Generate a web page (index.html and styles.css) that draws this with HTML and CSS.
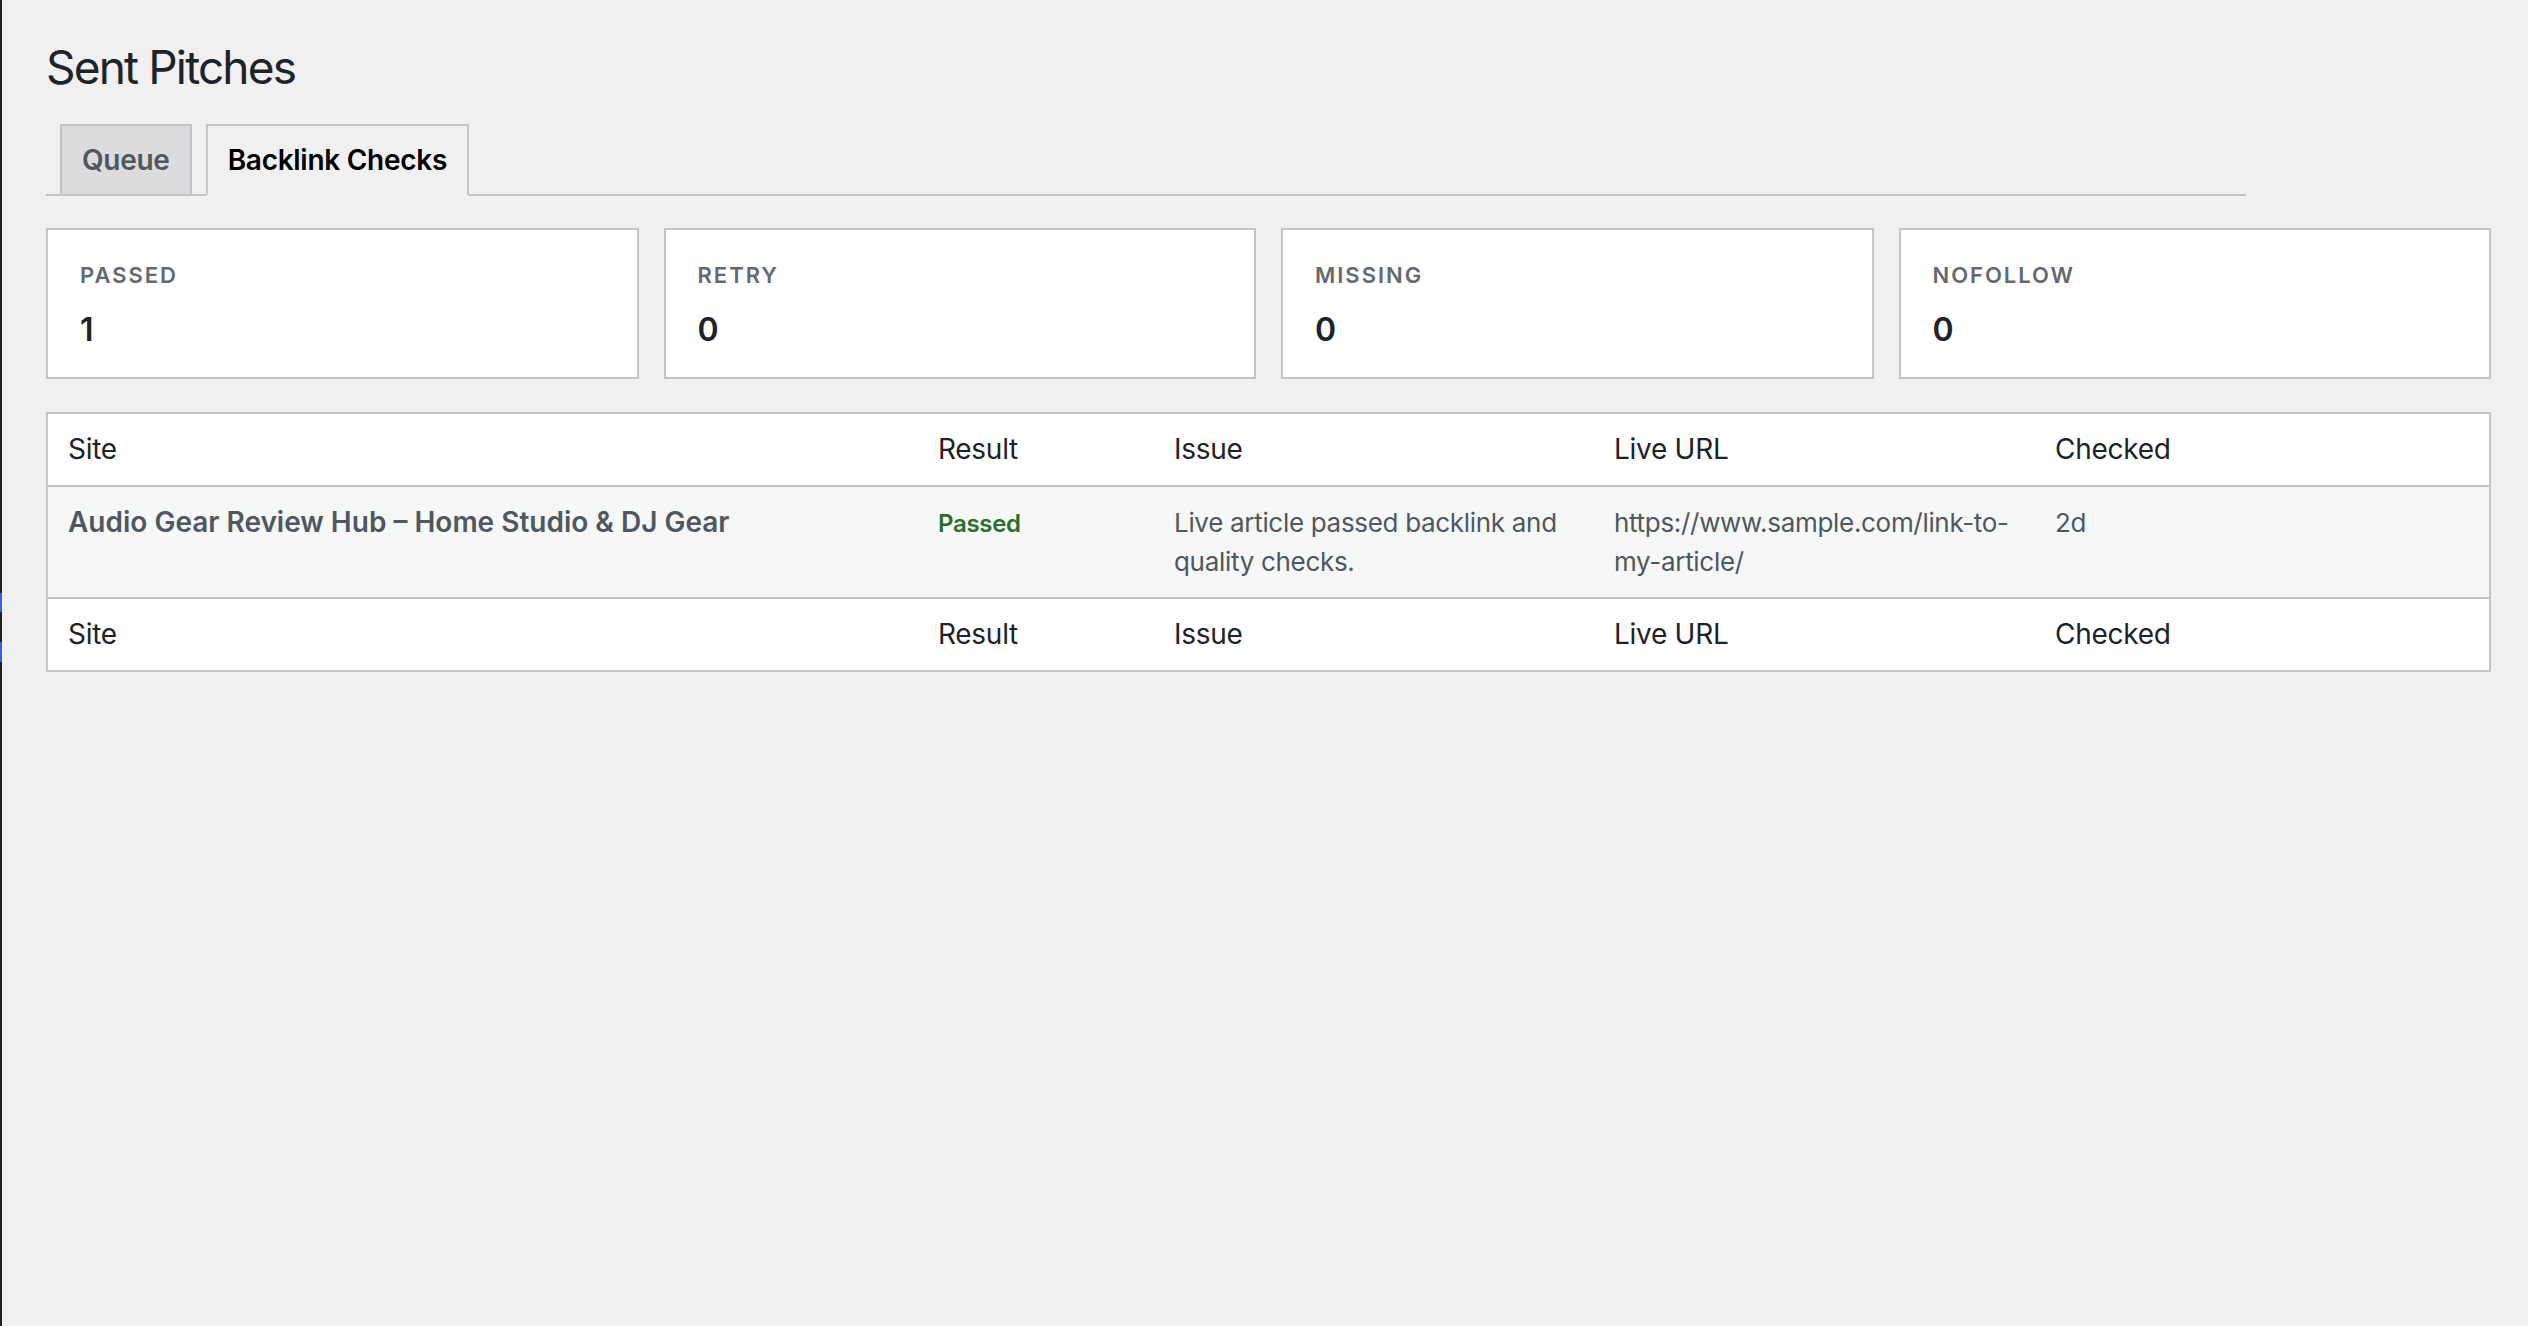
FILE: index.html
```html
<!DOCTYPE html>
<html lang="en">
<head>
  <meta charset="UTF-8">
  <meta name="viewport" content="width=device-width, initial-scale=1.0">
  <title>Sent Pitches - Backlink Checks</title>
  <link rel="stylesheet" href="styles.css">
</head>
<body>
  <!-- Edge of the admin menu -->
  <div class="admin-edge">
    <span class="edge-mark"></span>
    <span class="edge-mark second"></span>
  </div>

  <div class="wrap">
    <h1>Sent Pitches</h1>

    <nav class="nav-tab-wrapper">
      <a class="nav-tab" href="#queue">Queue</a>
      <a class="nav-tab nav-tab-active" href="#checks">Backlink Checks</a>
    </nav>

    <!-- Summary cards -->
    <div class="stat-grid">
      <div class="stat-card">
        <div class="stat-label">Passed</div>
        <div class="stat-value">1</div>
      </div>
      <div class="stat-card">
        <div class="stat-label">Retry</div>
        <div class="stat-value">0</div>
      </div>
      <div class="stat-card">
        <div class="stat-label">Missing</div>
        <div class="stat-value">0</div>
      </div>
      <div class="stat-card">
        <div class="stat-label">Nofollow</div>
        <div class="stat-value">0</div>
      </div>
    </div>

    <!-- Check results -->
    <table class="widefat">
      <colgroup>
        <col class="col-site">
        <col class="col-result">
        <col class="col-issue">
        <col class="col-url">
        <col>
      </colgroup>
      <thead>
        <tr>
          <th>Site</th>
          <th>Result</th>
          <th>Issue</th>
          <th>Live URL</th>
          <th>Checked</th>
        </tr>
      </thead>
      <tbody>
        <tr class="alternate">
          <td><strong class="row-title">Audio Gear Review Hub – Home Studio &amp; DJ Gear</strong></td>
          <td><span class="result result-passed">Passed</span></td>
          <td>Live article passed backlink and quality checks.</td>
          <td>https://www.sample.com/link-to-my-article/</td>
          <td>2d</td>
        </tr>
      </tbody>
      <tfoot>
        <tr>
          <th>Site</th>
          <th>Result</th>
          <th>Issue</th>
          <th>Live URL</th>
          <th>Checked</th>
        </tr>
      </tfoot>
    </table>
  </div>
</body>
</html>
```

FILE: styles.css
```css
:root {
  --page-bg: #f0f0f1;
  --border-color: #c3c4c7;
  --heading-color: #1d2327;
  --text-color: #50575e;
  --muted-color: #646970;
  --tab-bg: #dcdcde;
  --stripe-bg: #f6f7f7;
  --success-color: #2a6f2e;
  --font-family: Inter, 'Noto Sans', Arial, sans-serif;
}
body {
  margin: 0;
  min-height: 1326px;
  display: flex;
  background-color: var(--page-bg);
  font-family: var(--font-family);
  color: var(--text-color);
}
.admin-edge {
  flex: 0 0 2px;
  display: flex;
  flex-direction: column;
  background-color: #1d2327;
}
.edge-mark {
  display: block;
  height: 19px;
  margin-top: 593px;
  background-color: #3c5be6;
}
.edge-mark.second {
  height: 20px;
  margin-top: 30px;
}
.wrap {
  flex: 1;
  min-width: 0;
  margin: 20px 37px 0 44px;
}
h1 {
  margin: 0;
  padding: 18px 0 8px;
  font-size: 46px;
  line-height: 59.8px;
  font-weight: 400;
  letter-spacing: -0.04em;
  color: var(--heading-color);
}
.nav-tab-wrapper {
  display: flex;
  align-items: flex-end;
  max-width: 2200px;
  padding-top: 18px;
  border-bottom: 2px solid var(--border-color);
}
.nav-tab {
  margin-left: 14px;
  padding: 10px 20px;
  border: 2px solid var(--border-color);
  border-bottom: none;
  background-color: var(--tab-bg);
  color: var(--text-color);
  font-size: 28px;
  line-height: 48px;
  font-weight: 600;
  letter-spacing: -0.01em;
  text-decoration: none;
}
.nav-tab-active {
  margin-bottom: -2px;
  border-bottom: 2px solid var(--page-bg);
  background-color: var(--page-bg);
  color: #000;
}
.stat-grid {
  display: grid;
  grid-template-columns: repeat(4, 1fr);
  gap: 25px;
  margin-top: 32px;
}
.stat-card {
  padding: 32px 32px 28px;
  background-color: #fff;
  border: 2px solid var(--border-color);
}
.stat-label {
  font-size: 22px;
  line-height: 26px;
  font-weight: 600;
  letter-spacing: 0.09em;
  text-transform: uppercase;
  color: var(--muted-color);
}
.stat-value {
  margin-top: 23px;
  font-size: 32px;
  line-height: 38px;
  font-weight: 600;
  color: var(--heading-color);
}
.widefat {
  width: 100%;
  margin-top: 33px;
  table-layout: fixed;
  border-collapse: separate;
  border-spacing: 0;
  background-color: #fff;
  border: 2px solid var(--border-color);
}
.col-site {
  width: 870px;
}
.col-result {
  width: 236px;
}
.col-issue {
  width: 440px;
}
.col-url {
  width: 441px;
}
.widefat th,
.widefat td {
  padding: 16px 20px;
  text-align: left;
  vertical-align: top;
}
.widefat th {
  font-size: 28px;
  line-height: 39px;
  font-weight: 400;
  letter-spacing: -0.01em;
  color: var(--heading-color);
}
.widefat thead th {
  border-bottom: 2px solid var(--border-color);
}
.widefat tfoot th {
  border-top: 2px solid var(--border-color);
}
.widefat td {
  font-size: 26px;
  line-height: 39px;
  letter-spacing: -0.012em;
  color: var(--text-color);
}
.alternate td {
  background-color: var(--stripe-bg);
}
.row-title {
  font-size: 28px;
  font-weight: 600;
  letter-spacing: 0;
}
.result {
  font-size: 24px;
  font-weight: 600;
}
.result-passed {
  color: var(--success-color);
}
```
